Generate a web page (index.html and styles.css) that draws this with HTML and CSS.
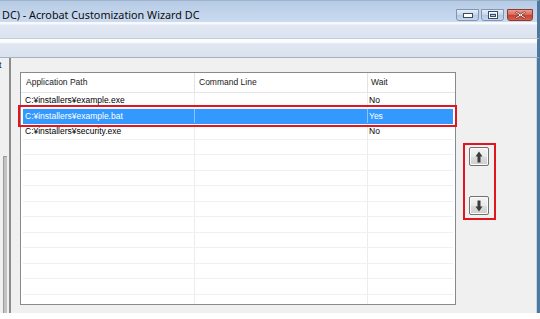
FILE: index.html
```html
<!DOCTYPE html>
<html lang="ja">
<head>
<meta charset="utf-8">
<title>Acrobat Customization Wizard DC</title>
<link rel="stylesheet" href="styles.css">
</head>
<body>
<div class="window">
  <div class="titlebar">
    <span class="title">DC) - Acrobat Customization Wizard DC</span>
    <div class="caption-btns">
      <div class="cbtn min"><svg width="10" height="5" viewBox="0 0 10 5"><rect x="0.5" y="0.5" width="9" height="4" fill="#fff" stroke="#3b4d66"/></svg></div>
      <div class="cbtn max"><svg width="10" height="8" viewBox="0 0 10 8"><rect x="0.5" y="0.5" width="9" height="7" fill="none" stroke="#3b4d66"/><rect x="1.5" y="1.5" width="7" height="5" fill="none" stroke="#fff"/><rect x="2.5" y="3.5" width="5" height="2" fill="none" stroke="#3b4d66"/></svg></div>
      <div class="cbtn close"><svg width="11" height="8" viewBox="0 0 11 8"><path d="M1.5 0.5 L5.5 3 L9.5 0.5 L10.5 1.5 L7 4 L10.5 6.5 L9.5 7.5 L5.5 5 L1.5 7.5 L0.5 6.5 L4 4 L0.5 1.5 Z" fill="#fff" stroke="#6b1f17" stroke-width="0.8"/></svg></div>
    </div>
  </div>
  <div class="bar bar1"></div>
  <div class="bar bar2"></div>
  <div class="main">
    <div class="leftpane">
      <span class="cut">t</span>
      <div class="groove"></div>
    </div>
    <div class="panel">
      <div class="list">
        <div class="row head">
          <div class="cell c1">Application Path</div>
          <div class="cell c2">Command Line</div>
          <div class="cell c3">Wait</div>
        </div>
        <div class="body">
          <div class="row"><div class="cell c1">C:¥installers¥example.exe</div><div class="cell c2"></div><div class="cell c3">No</div></div>
          <div class="row sel"><div class="cell c1">C:¥installers¥example.bat</div><div class="cell c2"></div><div class="cell c3">Yes</div></div>
          <div class="row"><div class="cell c1">C:¥installers¥security.exe</div><div class="cell c2"></div><div class="cell c3">No</div></div>
          <div class="row"><div class="cell c1"></div><div class="cell c2"></div><div class="cell c3"></div></div>
          <div class="row"><div class="cell c1"></div><div class="cell c2"></div><div class="cell c3"></div></div>
          <div class="row"><div class="cell c1"></div><div class="cell c2"></div><div class="cell c3"></div></div>
          <div class="row"><div class="cell c1"></div><div class="cell c2"></div><div class="cell c3"></div></div>
          <div class="row"><div class="cell c1"></div><div class="cell c2"></div><div class="cell c3"></div></div>
          <div class="row"><div class="cell c1"></div><div class="cell c2"></div><div class="cell c3"></div></div>
          <div class="row"><div class="cell c1"></div><div class="cell c2"></div><div class="cell c3"></div></div>
          <div class="row"><div class="cell c1"></div><div class="cell c2"></div><div class="cell c3"></div></div>
          <div class="row"><div class="cell c1"></div><div class="cell c2"></div><div class="cell c3"></div></div>
          <div class="row"><div class="cell c1"></div><div class="cell c2"></div><div class="cell c3"></div></div>
          <div class="row"><div class="cell c1"></div><div class="cell c2"></div><div class="cell c3"></div></div>
        </div>
      </div>
      <div class="side">
        <button class="mv" aria-label="Move up"><svg width="8" height="12" viewBox="0 0 8 12"><path d="M4 0.5 L7.5 5.5 H5.5 V11.5 H2.5 V5.5 H0.5 Z" fill="#3c3c3c"/></svg></button>
        <button class="mv down" aria-label="Move down"><svg width="8" height="12" viewBox="0 0 8 12"><path d="M4 11.5 L7.5 6.5 H5.5 V0.5 H2.5 V6.5 H0.5 Z" fill="#3c3c3c"/></svg></button>
      </div>
      <div class="hl hl-row"></div>
      <div class="hl hl-btns"></div>
    </div>
    <div class="rframe"></div>
  </div>
  <div class="bottom"></div>
</div>
</body>
</html>
```
FILE: styles.css
```css
* { box-sizing: border-box; margin: 0; padding: 0; }
html, body { width: 540px; height: 319px; overflow: hidden; background: #fff; }
body { font-family: "Liberation Sans", Arial, sans-serif; color: #000; }

.window { width: 540px; height: 319px; display: flex; flex-direction: column; }

.titlebar {
  height: 22px; flex: none;
  display: flex; align-items: flex-start;
  border-top: 1px solid #9fb3cb;
  border-right: 3px solid #4f789f;
  background: linear-gradient(#b6cbe5, #cadbf0);
}
.title {
  font-family: "Noto Sans", "Open Sans", sans-serif;
  font-size: 10.8px; line-height: 13px;
  padding: 7px 0 0 2px; color: #0d0d0d; white-space: nowrap;
}
.caption-btns { margin-left: auto; margin-right: 4px; margin-top: 8px; display: flex; gap: 2px; }
.cbtn {
  width: 23px; height: 12px; border: 1px solid #7f95b2; border-radius: 0 0 3px 3px;
  display: flex; align-items: center; justify-content: center;
  background: linear-gradient(#e6eef8, #c5d5ea 50%, #b2c7e1 51%, #c8d9ee);
}
.cbtn.min { align-items: flex-end; padding-bottom: 2px; }
.cbtn.close {
  width: 26px; margin-left: 1px; border-color: #8e3a31;
  background: linear-gradient(#eb9f93, #d86556 50%, #c9412f 51%, #d7624f);
}

.bar { flex: none; border-right: 3px solid #4f789f; }
.bar1 {
  height: 17px; border-bottom: 1px solid #c6ccd5;
  background: linear-gradient(#f7f9fc 0, #f7f9fc 2px, #e1e8f3 3px, #dbe3f0);
}
.bar2 {
  height: 19px; border-bottom: 1px solid #a8b1be;
  background: linear-gradient(#fbfcfe 0, #fbfcfe 3px, #e0e7f2 5px, #d9e2ef);
}

.main { height: 255px; flex: none; display: flex; background: #f0f0f0; border-right: 3px solid #4f789f; }

.leftpane {
  width: 11px; flex: none; position: relative; overflow: hidden;
  border-right: 2px solid #8c8c8c;
}
.cut {
  display: block; font-size: 9px; line-height: 10px; margin: 2px 0 0 -1px; color: #222;
}
.groove {
  margin: 86px 0 0 3px; width: 4px; height: 157px;
  border-left: 1px solid #9b9b9b; border-top: 1px solid #9b9b9b;
  background: #c2c2c2;
}

.panel {
  flex: 1; position: relative; display: flex; align-items: flex-start;
  padding: 14px 0 0 9px;
}

.list {
  width: 436px; height: 233px; flex: none; overflow: hidden;
  background: #fff; border: 1px solid #868a91;
  font-size: 8.5px;
}
.row { display: flex; height: 15.5px; border-bottom: 1px solid #f0f0f0; }
.cell { line-height: 14.5px; white-space: nowrap; overflow: hidden; }
.head { height: 20px; border-bottom: 1px solid #e5e5e5; }
.head .cell { line-height: 19px; color: #1a1a1a; }
.head .c1 { width: 174px; padding-left: 5px; border-right: 1px solid #e3e3e3; }
.head .c2 { width: 173px; padding-left: 4px; border-right: 1px solid #e3e3e3; }
.head .c3 { flex: 1; padding-left: 3px; }

.body { padding: 0 2px; }
.body .c1 { width: 172px; padding-left: 2px; border-right: 1px solid #ececec; }
.body .c2 { width: 173px; border-right: 1px solid #ececec; }
.body .c3 { flex: 1; padding-left: 1px; }

.row.sel { background: #3399ff; color: #fff; border-bottom-color: #3399ff; }
.row.sel .cell { border-right-color: #8cc4fb; }

.side { display: flex; flex-direction: column; padding: 75px 0 0 13px; gap: 30px; }
.mv {
  width: 20px; height: 19px; display: flex; align-items: center; justify-content: center;
  border: 1px solid #727272; border-radius: 2px;
  background: linear-gradient(#f4f4f4, #e9e9e9 50%, #dcdcdc 51%, #cfcfcf);
  box-shadow: inset 0 0 0 1px #fafafa;
}

.hl { position: absolute; border: 2px solid #e0151d; }
.hl-row { left: 7px; top: 47px; width: 439px; height: 22px; }
.hl-btns { left: 452px; top: 85px; width: 33px; height: 77px; }

.rframe { width: 1px; flex: none; background: #c3d6ec; }
.bottom { height: 6px; flex: none; background: #fff; }
```
